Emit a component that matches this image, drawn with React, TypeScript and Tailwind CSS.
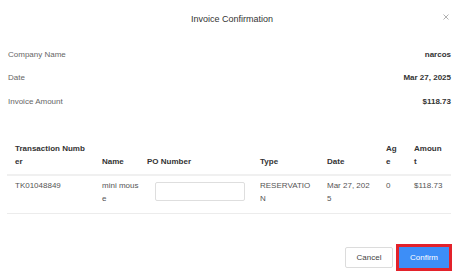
import { useState } from "react";

const info = [
  { label: "Company Name", value: "narcos" },
  { label: "Date", value: "Mar 27, 2025" },
  { label: "Invoice Amount", value: "$118.73" },
];

export default function App() {
  const [po, setPo] = useState("");

  return (
    <div className="relative w-[464px] h-[279px] bg-white font-['Liberation_Sans',Arial,sans-serif] text-[8px] leading-[12.6px]">
      {/* Header */}
      <div className="flex h-[38px] items-center justify-center text-[9px] text-[#333]">
        Invoice Confirmation
      </div>
      <button className="absolute left-[443px] top-[14px] flex h-[6px] w-[6px] items-center justify-center">
        <svg width="6" height="6" viewBox="0 0 6 6">
          <path d="M0.5 0.5 L5.5 5.5 M5.5 0.5 L0.5 5.5" stroke="#a8a8a8" strokeWidth="0.9" />
        </svg>
      </button>

      {/* Summary */}
      <div className="mt-[10.7px] flex flex-col gap-[11px] pl-[8px] pr-[13px]">
        {info.map((r) => (
          <div key={r.label} className="flex justify-between">
            <span className="text-[#666]">{r.label}</span>
            <span className="font-bold text-[#333]">{r.value}</span>
          </div>
        ))}
      </div>

      {/* Table */}
      <table className="ml-[7px] mt-[30.5px] w-[444px] table-fixed border-collapse break-all">
        <colgroup>
          <col className="w-[87px]" />
          <col className="w-[49px]" />
          <col className="w-[109px]" />
          <col className="w-[71px]" />
          <col className="w-[59px]" />
          <col className="w-[26px]" />
          <col className="w-[43px]" />
        </colgroup>
        <thead>
          <tr className="border-b-2 border-[#f0f0f0] text-left align-bottom font-bold text-[#333]">
            <th className="pl-[8px] pr-[8px] pt-[4px] pb-[6px]">Transaction Number</th>
            <th className="pl-[8px] pr-[3px] pt-[4px] pb-[6px]">Name</th>
            <th className="pl-[4px] pr-[7px] pt-[4px] pb-[6px]">PO Number</th>
            <th className="pl-[8px] pr-[8px] pt-[4px] pb-[6px]">Type</th>
            <th className="pl-[4px] pr-[10px] pt-[4px] pb-[6px]">Date</th>
            <th className="pl-[4px] pr-[9px] pt-[4px] pb-[6px]">Age</th>
            <th className="pl-[6px] pr-[7.5px] pt-[4px] pb-[6px]">Amount</th>
          </tr>
        </thead>
        <tbody>
          <tr className="border-b border-[#ececec] align-top text-[#555]">
            <td className="pl-[8px] pr-[8px] pt-[4px] pb-[8px]">TK01048849</td>
            <td className="pl-[8px] pr-[3px] pt-[4px] pb-[8px]">mini mouse</td>
            <td className="pl-[4px] pr-[7px] pt-[4px] pb-[8px]">
              <input
                value={po}
                onChange={(e) => setPo(e.target.value)}
                className="ml-[8px] mt-[2px] block h-[19px] w-[90px] rounded-[2px] border border-[#dedede] bg-white px-[4px] text-[8px] outline-none"
              />
            </td>
            <td className="pl-[8px] pr-[8px] pt-[4px] pb-[8px]">RESERVATION</td>
            <td className="pl-[4px] pr-[10px] pt-[4px] pb-[8px]">Mar 27, 2025</td>
            <td className="pl-[4px] pr-[9px] pt-[4px] pb-[8px]">0</td>
            <td className="pl-[6px] pr-[7.5px] pt-[4px] pb-[8px]">$118.73</td>
          </tr>
        </tbody>
      </table>

      {/* Footer */}
      <div className="mt-[30px] flex items-center justify-end gap-[3px] pr-[12px]">
        <button className="h-[21px] w-[48px] rounded-[2px] border border-[#dcdcdc] bg-white text-[8px] text-[#444]">
          Cancel
        </button>
        <div className="border-[3px] border-[#e3222b]">
          <button className="block h-[21px] w-[50px] bg-[#3d8ef7] text-[8px] text-white">
            Confirm
          </button>
        </div>
      </div>
    </div>
  );
}
